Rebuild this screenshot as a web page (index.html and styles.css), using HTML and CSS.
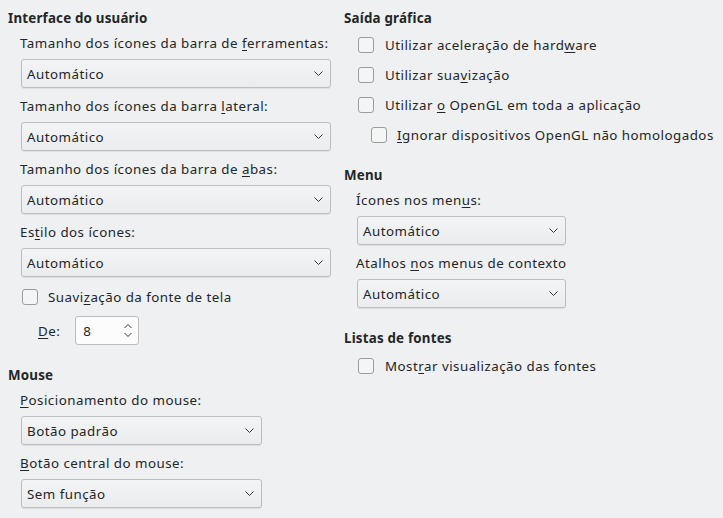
FILE: index.html
```html
<!DOCTYPE html>
<html lang="pt-BR">
<head>
<meta charset="utf-8">
<title>Exibir</title>
<link rel="stylesheet" href="styles.css">
</head>
<body>
<div class="page">
  <div class="col">
    <section class="group">
      <div class="heading">Interface do usuário</div>
      <div class="body">
        <div class="label">Tamanho dos ícones da barra de <u>f</u>erramentas:</div>
        <div class="combo w-full"><span>Automático</span><svg class="chev" viewBox="0 0 9 5"><path d="M0.5 0.5 L4.5 4.5 L8.5 0.5"/></svg></div>
        <div class="label">Tamanho dos ícones da barra <u>l</u>ateral:</div>
        <div class="combo w-full"><span>Automático</span><svg class="chev" viewBox="0 0 9 5"><path d="M0.5 0.5 L4.5 4.5 L8.5 0.5"/></svg></div>
        <div class="label">Tamanho dos ícones da barra de <u>a</u>bas:</div>
        <div class="combo w-full"><span>Automático</span><svg class="chev" viewBox="0 0 9 5"><path d="M0.5 0.5 L4.5 4.5 L8.5 0.5"/></svg></div>
        <div class="label">Es<u>t</u>ilo dos ícones:</div>
        <div class="combo w-full"><span>Automático</span><svg class="chev" viewBox="0 0 9 5"><path d="M0.5 0.5 L4.5 4.5 L8.5 0.5"/></svg></div>
        <div class="check first"><span class="box"></span><span>Suavi<u>z</u>ação da fonte de tela</span></div>
        <div class="spinrow">
          <span class="spinlabel"><u>D</u>e:</span>
          <div class="spin"><span>8</span>
            <svg class="updown" viewBox="0 0 8 13"><path d="M0.5 4 L4 0.5 L7.5 4"/><path d="M0.5 9 L4 12.5 L7.5 9"/></svg>
          </div>
        </div>
      </div>
    </section>
    <section class="group mouse">
      <div class="heading">Mouse</div>
      <div class="body">
        <div class="label"><u>P</u>osicionamento do mouse:</div>
        <div class="combo w-mouse"><span>Botão padrão</span><svg class="chev" viewBox="0 0 9 5"><path d="M0.5 0.5 L4.5 4.5 L8.5 0.5"/></svg></div>
        <div class="label"><u>B</u>otão central do mouse:</div>
        <div class="combo w-mouse"><span>Sem função</span><svg class="chev" viewBox="0 0 9 5"><path d="M0.5 0.5 L4.5 4.5 L8.5 0.5"/></svg></div>
      </div>
    </section>
  </div>
  <div class="col">
    <section class="group">
      <div class="heading">Saída gráfica</div>
      <div class="body">
        <div class="check first"><span class="box"></span><span>Utilizar aceleração de hard<u>w</u>are</span></div>
        <div class="check"><span class="box"></span><span>Utilizar sua<u>v</u>ização</span></div>
        <div class="check"><span class="box"></span><span>Utilizar <u>o</u> OpenGL em toda a aplicação</span></div>
        <div class="check sub"><span class="box"></span><span><u>I</u>gnorar dispositivos OpenGL não homologados</span></div>
      </div>
    </section>
    <section class="group menu">
      <div class="heading">Menu</div>
      <div class="body">
        <div class="label">Ícones nos men<u>u</u>s:</div>
        <div class="combo w-menu"><span>Automático</span><svg class="chev" viewBox="0 0 9 5"><path d="M0.5 0.5 L4.5 4.5 L8.5 0.5"/></svg></div>
        <div class="label">Atalhos <u>n</u>os menus de contexto</div>
        <div class="combo w-menu"><span>Automático</span><svg class="chev" viewBox="0 0 9 5"><path d="M0.5 0.5 L4.5 4.5 L8.5 0.5"/></svg></div>
      </div>
    </section>
    <section class="group fonts">
      <div class="heading">Listas de fontes</div>
      <div class="body">
        <div class="check tight"><span class="box"></span><span>Most<u>r</u>ar visualização das fontes</span></div>
      </div>
    </section>
  </div>
</div>
</body>
</html>
```

FILE: styles.css
```css
html, body {
  margin: 0;
  padding: 0;
  background: #eff0f1;
}
body {
  font-family: "Noto Sans", "DejaVu Sans", sans-serif;
  font-size: 13.33px;
  letter-spacing: 0.48px;
  color: #232627;
  width: 723px;
  height: 518px;
  overflow: hidden;
}
.page {
  display: grid;
  grid-template-columns: 336px 1fr;
  padding-left: 8px;
}
.col {
  display: flex;
  flex-direction: column;
}
.heading {
  font-weight: bold;
  letter-spacing: 0.2px;
  line-height: 18px;
  padding-top: 9px;
  height: 16px;
}
.body {
  display: flex;
  flex-direction: column;
  align-items: flex-start;
  padding-left: 12px;
}
u {
  text-decoration: underline;
  text-decoration-thickness: 1px;
  text-underline-offset: 2px;
}
.label {
  line-height: 18px;
  padding-top: 9px;
  height: 25px;
  white-space: nowrap;
}
.combo {
  box-sizing: border-box;
  height: 29px;
  margin-left: 1px;
  border: 1px solid #bcbec0;
  border-radius: 3px;
  background: linear-gradient(#f3f4f5, #ebeced);
  box-shadow: 0 1px 1px rgba(0, 0, 0, 0.08);
  display: flex;
  align-items: center;
  justify-content: space-between;
  padding: 0 7px 0 5px;
}
.combo span {
  line-height: 18px;
}
.chev {
  width: 9px;
  height: 5px;
  fill: none;
  stroke: #31363b;
  stroke-width: 1;
}
.w-full { width: 310px; }
.w-mouse { width: 241px; }
.w-menu { width: 209px; }

.check {
  display: flex;
  align-items: center;
  height: 30px;
  margin-left: 2px;
  gap: 11px;
  white-space: nowrap;
}
.check.first { margin-top: 5px; }
.check.sub { margin-left: 15px; gap: 10px; }
.check.tight { margin-top: 6px; }
.box {
  box-sizing: border-box;
  width: 16px;
  height: 16px;
  border: 1px solid #9a9c9e;
  border-radius: 3px;
  background: #f4f5f5;
  flex: none;
}
.col:first-child .check { gap: 10px; }

.spinrow {
  display: flex;
  align-items: center;
  margin-top: 4px;
  padding-left: 18px;
  gap: 15px;
}
.spinlabel {
  line-height: 18px;
}
.spin {
  box-sizing: border-box;
  width: 64px;
  height: 29px;
  border: 1px solid #bcbec0;
  border-radius: 3px;
  background: #fcfcfc;
  display: flex;
  align-items: center;
  justify-content: space-between;
  padding: 0 6px 0 7px;
}
.updown {
  width: 8px;
  height: 13px;
  fill: none;
  stroke: #31363b;
  stroke-width: 1;
}
.mouse { margin-top: 12px; }
.menu { margin-top: 7px; }
.fonts { margin-top: 12px; }
```
